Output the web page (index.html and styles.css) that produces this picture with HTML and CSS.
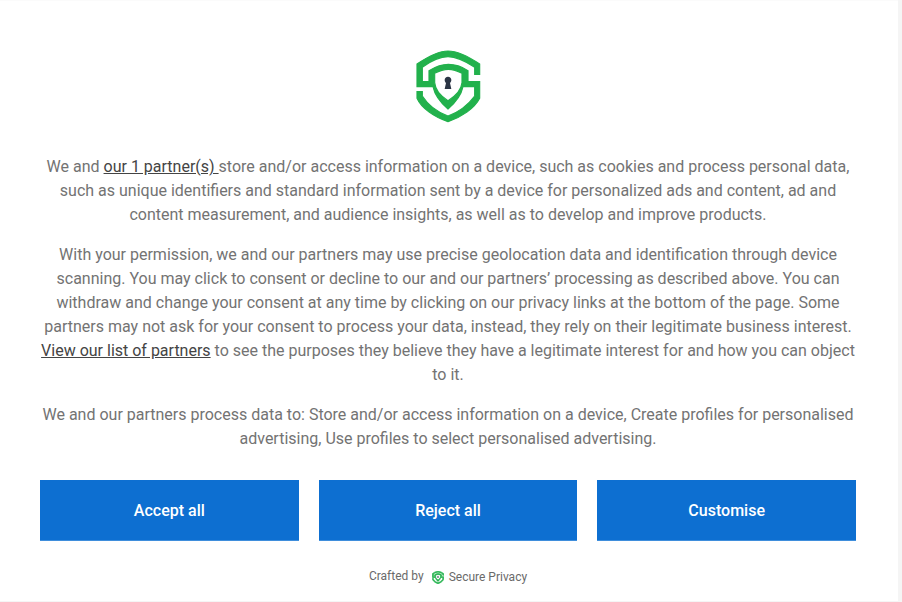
FILE: index.html
```html
<!DOCTYPE html>
<html lang="en">
<head>
<meta charset="utf-8">
<title>Consent</title>
<link rel="stylesheet" href="styles.css">
</head>
<body>
<svg class="defs" width="0" height="0" aria-hidden="true">
  <symbol id="shield" viewBox="46 30 198 219">
    <path class="mark" fill-rule="evenodd" d="M52 72 C85 50 115 33 145 33 C175 33 210 52 240 72 V103 H225 V82 C195 62 170 50 145 50 C120 50 95 62 68 82 V125 H88 V92 C108 80 125 73 146 73 C167 73 187 80 205 92 V125 H240 V175 C225 205 185 232 145 245 C105 232 65 205 52 175 V155 H68 V168 C85 195 115 217 145 228 C175 217 205 195 225 168 V140 H190 C185 165 165 190 145 207 C125 190 105 165 100 140 H52 Z M105 100 C120 92 135 88 146 88 C157 88 172 92 187 100 V128 C185 150 165 170 145 182 C125 170 107 150 105 128 Z" />
    <path class="keyhole" d="M145 110 C151 110 155 114 155 120 C155 124 153 127 151 129 L155 147 H135 L139 129 C137 127 135 124 135 120 C135 114 139 110 145 110 Z" />
  </symbol>
</svg>
<main class="panel">
  <div class="logo">
    <svg class="logo-svg" width="66" height="73"><use href="#shield" /></svg>
  </div>
  <div class="copy">
    <p class="para">We and <a class="link" href="#">our 1 partner(s) </a>store and/or access information on a device, such as cookies and process personal data, such as unique identifiers and standard information sent by a device for personalized ads and content, ad and content measurement, and audience insights, as well as to develop and improve products.</p>
    <p class="para">With your permission, we and our partners may use precise geolocation data and identification through device scanning. You may click to consent or decline to our and our partners’ processing as described above. You can withdraw and change your consent at any time by clicking on our privacy links at the bottom of the page. Some partners may not ask for your consent to process your data, instead, they rely on their legitimate business interest. <a class="link" href="#">View our list of partners</a> to see the purposes they believe they have a legitimate interest for and how you can object to it.</p>
    <p class="para">We and our partners process data to: Store and/or access information on a device, Create profiles for personalised advertising, Use profiles to select personalised advertising.</p>
  </div>
  <div class="actions">
    <button class="btn" type="button">Accept all</button>
    <button class="btn" type="button">Reject all</button>
    <button class="btn" type="button">Customise</button>
  </div>
  <footer class="credit">
    <span class="credit-by">Crafted by</span>
    <svg class="credit-logo" width="12" height="13"><use href="#shield" /></svg>
    <span class="credit-name">Secure Privacy</span>
  </footer>
</main>
</body>
</html>
```
FILE: styles.css
```css
html, body {
  margin: 0;
  padding: 0;
  background: #f5f5f5;
  height: 100%;
  overflow: hidden;
}
.defs { display: block; height: 0; }
.panel {
  box-sizing: border-box;
  width: 898px;
  height: 601px;
  background: #fff;
  border-top: 1px solid #fbfbfb;
  padding: 49px 42px 0 40px;
  font-family: Roboto, "Liberation Sans", sans-serif;
  color: #737373;
}
.logo {
  display: flex;
  justify-content: center;
  height: 73px;
  margin-bottom: 32px;
}
.logo-svg { display: block; overflow: visible; stroke-width: 3.5; }
.mark { fill: #22b14c; stroke: #22b14c; }
.keyhole { fill: #2a3444; stroke: none; }
.copy { text-align: center; }
.para {
  margin: 0 0 16px;
  font-size: 16px;
  line-height: 24px;
}
.link {
  color: #444;
  text-decoration: underline;
}
.actions {
  display: grid;
  grid-template-columns: repeat(3, 1fr);
  gap: 20px;
  margin-top: 29px;
}
.btn {
  box-sizing: border-box;
  height: 61px;
  border: 0;
  border-bottom: 1px solid #3f8edc;
  background: #0d6fd1;
  color: #fff;
  font: 500 16px Roboto, "Liberation Sans", sans-serif;
  padding: 1px 0 0;
}
.credit {
  display: flex;
  justify-content: center;
  align-items: center;
  margin-top: 28px;
  font-size: 12px;
  line-height: 16px;
  color: #6a6a6a;
}
.credit-by { margin-right: 8px; position: relative; top: -1px; }
.credit-logo { display: block; margin-right: 5px; stroke-width: 12; }
```
